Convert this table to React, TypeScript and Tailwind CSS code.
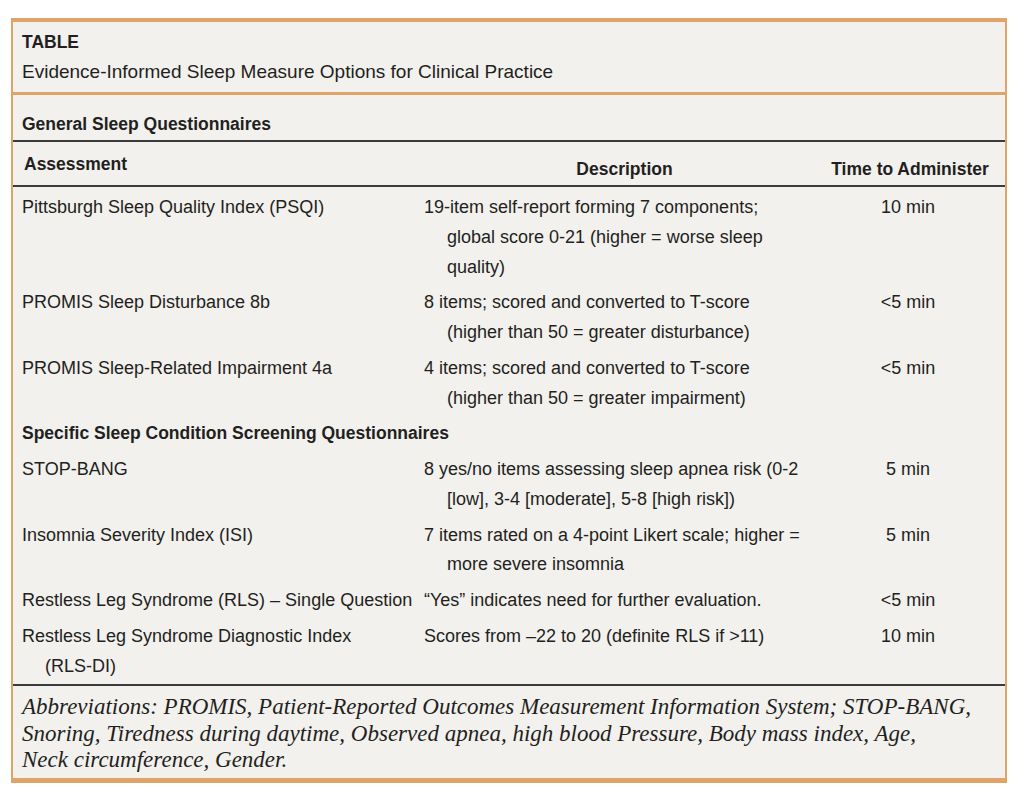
import React from 'react'

type Row = {
  assessment: string[]
  description: string[]
  time: string
}

const GENERAL: Row[] = [
  {
    assessment: ['Pittsburgh Sleep Quality Index (PSQI)'],
    description: [
      '19-item self-report forming 7 components;',
      'global score 0-21 (higher = worse sleep',
      'quality)',
    ],
    time: '10 min',
  },
  {
    assessment: ['PROMIS Sleep Disturbance 8b'],
    description: ['8 items; scored and converted to T-score', '(higher than 50 = greater disturbance)'],
    time: '<5 min',
  },
  {
    assessment: ['PROMIS Sleep-Related Impairment 4a'],
    description: ['4 items; scored and converted to T-score', '(higher than 50 = greater impairment)'],
    time: '<5 min',
  },
]

const SPECIFIC: Row[] = [
  {
    assessment: ['STOP-BANG'],
    description: ['8 yes/no items assessing sleep apnea risk (0-2', '[low], 3-4 [moderate], 5-8 [high risk])'],
    time: '5 min',
  },
  {
    assessment: ['Insomnia Severity Index (ISI)'],
    description: ['7 items rated on a 4-point Likert scale; higher =', 'more severe insomnia'],
    time: '5 min',
  },
  {
    assessment: ['Restless Leg Syndrome (RLS) \u2013 Single Question'],
    description: ['\u201cYes\u201d indicates need for further evaluation.'],
    time: '<5 min',
  },
  {
    assessment: ['Restless Leg Syndrome Diagnostic Index', '(RLS-DI)'],
    description: ['Scores from \u201322 to 20 (definite RLS if >11)'],
    time: '10 min',
  },
]

function Lines({ lines }: { lines: string[] }) {
  return (
    <div>
      {lines.map((line, i) => (
        <div key={i} className={i > 0 ? 'pl-[23px]' : ''}>
          {line}
        </div>
      ))}
    </div>
  )
}

function TableRow({ row }: { row: Row }) {
  return (
    <div className="grid grid-cols-[411px_391px_1fr] py-[3px]">
      <div className="pl-[9px]">
        <Lines lines={row.assessment} />
      </div>
      <Lines lines={row.description} />
      <div className="text-center pr-[4px]">{row.time}</div>
    </div>
  )
}

export default function App() {
  return (
    <div className="min-h-[800px] bg-white pt-[18px] pl-[11px]">
      <div
        className="w-[996px] border-x-2 border-t-[4px] border-b-[5px] border-[#e0a468] bg-[#f2f1ee] text-[#231f20] text-[18px] leading-[29.75px]"
        style={{ fontFamily: '"Liberation Sans", Arial, sans-serif' }}
      >
        {/* Title */}
        <div className="px-[9px] pt-[5px] pb-[5px] border-b-[3px] border-[#e0a468] leading-[30px]">
          <div className="font-bold text-[17.5px]">TABLE</div>
          <div className="text-[19px]">Evidence-Informed Sleep Measure Options for Clinical Practice</div>
        </div>

        {/* Section */}
        <div className="px-[9px] pt-[14px] pb-[1px] font-semibold text-[17.5px] leading-[30px] border-b-2 border-[#3b3b3b]">
          General Sleep Questionnaires
        </div>

        {/* Header */}
        <div className="grid grid-cols-[411px_391px_1fr] pt-[12px] pb-[1px] font-semibold text-[17.5px] leading-[30px] border-b-2 border-[#3b3b3b]">
          <div className="pl-[11px] -mt-[5px]">Assessment</div>
          <div className="text-center pl-[10px]">Description</div>
          <div className="text-center">Time to Administer</div>
        </div>

        {/* Rows */}
        <div className="pt-[3px] border-b-2 border-[#3b3b3b]">
          {GENERAL.map((row, i) => (
            <TableRow key={i} row={row} />
          ))}
          <div className="px-[9px] py-[3px] font-bold text-[17.5px]">
            Specific Sleep Condition Screening Questionnaires
          </div>
          {SPECIFIC.map((row, i) => (
            <TableRow key={i} row={row} />
          ))}
        </div>

        {/* Footnote */}
        <div
          className="px-[9px] pt-[8px] pb-[4px] italic text-[23px] leading-[26.5px]"
          style={{ fontFamily: '"Liberation Serif", "Times New Roman", serif' }}
        >
          <div>
            Abbreviations: PROMIS, Patient-Reported Outcomes Measurement Information System; STOP-BANG,
          </div>
          <div>
            Snoring, Tiredness during daytime, Observed apnea, high blood Pressure, Body mass index, Age,
          </div>
          <div>Neck circumference, Gender.</div>
        </div>
      </div>
    </div>
  )
}
